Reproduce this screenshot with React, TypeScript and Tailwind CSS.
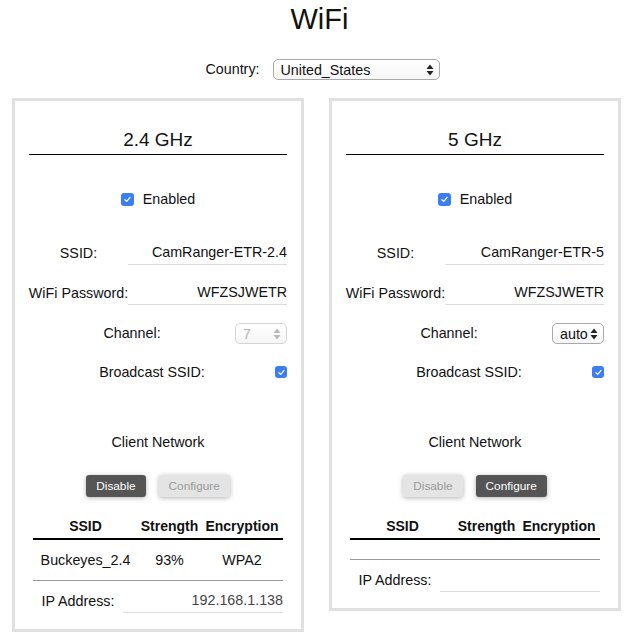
import React from 'react';

interface BandProps {
  title: string;
  ssid: string;
  password: string;
  channel: string;
  channelDisabled: boolean;
  clientEnabled: boolean;
  network: { ssid: string; strength: string; encryption: string } | null;
  ipAddress: string;
}

function Check({ size = 13 }: { size?: number }) {
  return (
    <span
      className="inline-flex shrink-0 items-center justify-center rounded-[3px] bg-[#3a7ef2]"
      style={{ width: size, height: size }}
    >
      <svg viewBox="0 0 12 12" className="h-[9px] w-[9px]" fill="none">
        <path d="M2.5 6.3 L5 8.6 L9.5 3.3" stroke="#fff" strokeWidth="1.6" strokeLinecap="round" strokeLinejoin="round" />
      </svg>
    </span>
  );
}

function Arrows({ color }: { color: string }) {
  return (
    <svg viewBox="0 0 8 12" className="h-[12px] w-[8px]" fill={color}>
      <path d="M4 0.5 L7.5 5 H0.5 Z" />
      <path d="M4 11.5 L7.5 7 H0.5 Z" />
    </svg>
  );
}

function FakeSelect({
  value,
  width,
  disabled = false,
}: {
  value: string;
  width: string;
  disabled?: boolean;
}) {
  return (
    <div
      className={`flex h-[21px] shrink-0 items-center justify-between rounded-[5px] border bg-gradient-to-b from-white to-[#f6f6f6] pl-[7px] pr-[5px] ${width} ${
        disabled ? 'border-[#d4d4d4] text-[#b5b5b5]' : 'border-[#a9a9a9] text-[#111]'
      }`}
    >
      <span className="leading-none">{value}</span>
      <Arrows color={disabled ? '#b8b8b8' : '#222'} />
    </div>
  );
}

function InputRow({ label, value, className = '' }: { label: string; value: string; className?: string }) {
  return (
    <div className={`flex h-[24px] items-stretch ${className}`}>
      <div className="flex w-[99px] shrink-0 items-center justify-center whitespace-nowrap">{label}</div>
      <div className="flex flex-1 items-center justify-end whitespace-nowrap border-b border-[#dcdcdc]">{value}</div>
    </div>
  );
}

function Band({ title, ssid, password, channel, channelDisabled, clientEnabled, network, ipAddress }: BandProps) {
  return (
    <div className="w-[292px] shrink-0 border-[3px] border-[#e0e0e0] px-[14px] pb-[16px]">
      <div className="mt-[28px] border-b border-black pb-[3px] text-center text-[19px] leading-[22px]">{title}</div>

      <div className="mt-[34px] flex h-[20px] items-center justify-center gap-[9px]">
        <Check />
        <span>Enabled</span>
      </div>

      <InputRow label="SSID:" value={ssid} className="mt-[32px]" />
      <InputRow label="WiFi Password:" value={password} className="mt-[16px]" />

      <div className="mt-[18px] flex h-[21px] items-center">
        <div className="flex-1 whitespace-nowrap text-center">Channel:</div>
        <FakeSelect value={channel} width="w-[52px]" disabled={channelDisabled} />
      </div>

      <div className="mt-[18px] flex h-[20px] items-center">
        <div className="flex-1 whitespace-nowrap text-center">Broadcast SSID:</div>
        <Check size={12} />
      </div>

      <div className="mt-[50px] flex h-[20px] items-center justify-center">Client Network</div>

      <div className="mt-[23px] flex justify-center gap-[13px] text-[11.8px]">
        <button
          className={`h-[22px] rounded-[3px] px-[10px] shadow-[0_1px_5px_rgba(0,0,0,0.3)] ${
            clientEnabled ? 'bg-[#555555] text-white' : 'bg-[#e4e4e4] text-[#9a9a9a]'
          }`}
        >
          Disable
        </button>
        <button
          className={`h-[22px] rounded-[3px] px-[10px] shadow-[0_1px_5px_rgba(0,0,0,0.3)] ${
            clientEnabled ? 'bg-[#e4e4e4] text-[#9a9a9a]' : 'bg-[#555555] text-white'
          }`}
        >
          Configure
        </button>
      </div>

      <div className="mx-[4px] mt-[18px]">
        <div className="grid h-[25px] grid-cols-[105px_63px_1fr] items-center border-b-2 border-black text-[14px] font-bold">
          <div className="text-center">SSID</div>
          <div className="text-center">Strength</div>
          <div className="text-center">Encryption</div>
        </div>
        {network ? (
          <div className="grid grid-cols-[105px_63px_1fr] border-b border-[#9a9a9a] py-[10px] leading-[20px]">
            <div className="text-center">{network.ssid}</div>
            <div className="text-center">{network.strength}</div>
            <div className="text-center">{network.encryption}</div>
          </div>
        ) : (
          <div className="h-[20px] border-b border-[#9a9a9a]" />
        )}
        <div className="mt-[8px] flex h-[24px] items-stretch">
          <div className="flex w-[90px] shrink-0 items-center justify-center whitespace-nowrap">IP Address:</div>
          <div className="flex flex-1 items-center justify-end border-b border-[#dcdcdc] text-[#444]">{ipAddress}</div>
        </div>
      </div>
    </div>
  );
}

export default function App() {
  return (
    <div className="min-h-[636px] bg-white font-['Liberation_Sans',Arial,sans-serif] text-[14.3px] text-[#111]">
      <h1 className="pl-[5px] pt-[2px] text-center text-[29px] leading-[34px]">WiFi</h1>

      <div className="mt-[23px] flex items-center justify-center gap-[13px] pl-[11px]">
        <span>Country:</span>
        <FakeSelect value="United_States" width="w-[167px]" />
      </div>

      <div className="mt-[18px] flex items-start gap-[25px] pl-[12px]">
        <Band
          title="2.4 GHz"
          ssid="CamRanger-ETR-2.4"
          password="WFZSJWETR"
          channel="7"
          channelDisabled
          clientEnabled
          network={{ ssid: 'Buckeyes_2.4', strength: '93%', encryption: 'WPA2' }}
          ipAddress="192.168.1.138"
        />
        <Band
          title="5 GHz"
          ssid="CamRanger-ETR-5"
          password="WFZSJWETR"
          channel="auto"
          channelDisabled={false}
          clientEnabled={false}
          network={null}
          ipAddress=""
        />
      </div>
    </div>
  );
}
